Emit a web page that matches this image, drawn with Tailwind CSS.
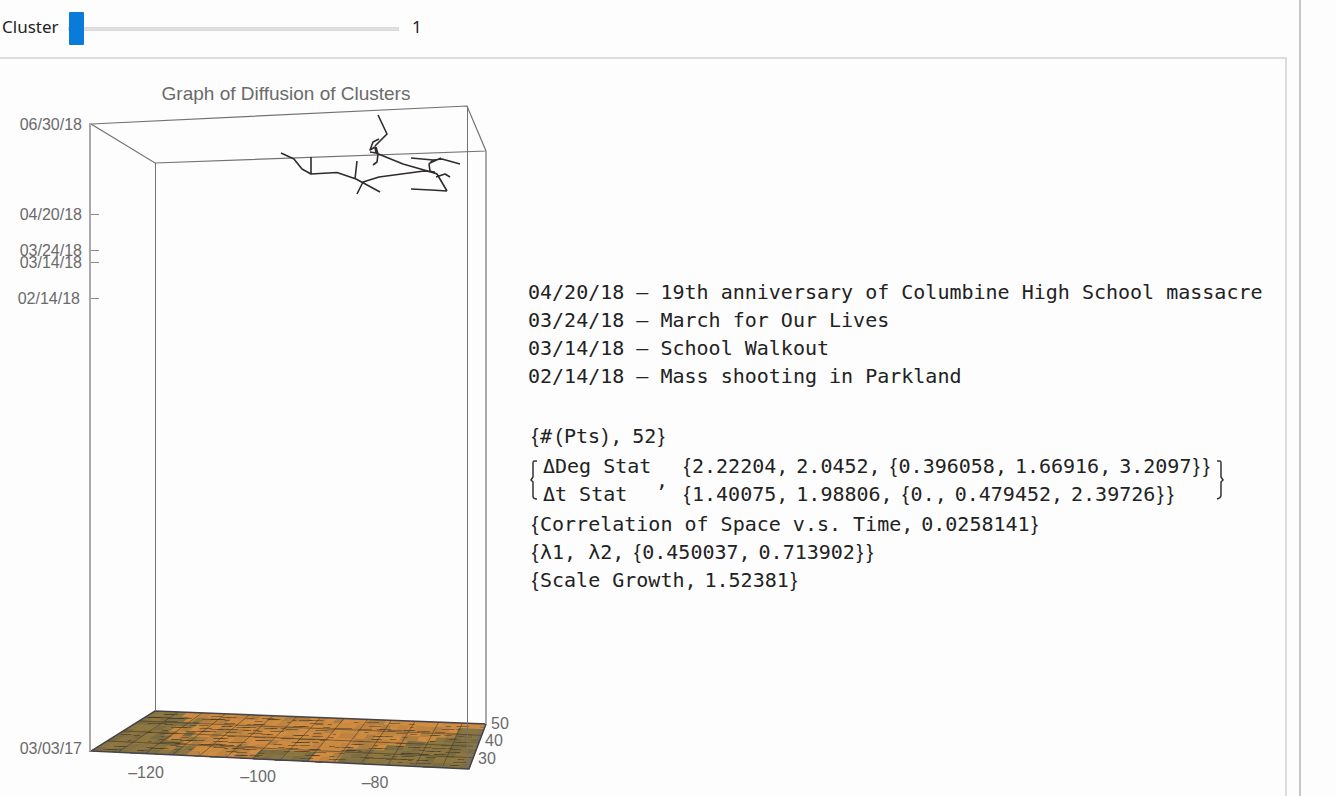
<!DOCTYPE html>
<html lang="en">
<head>
<meta charset="utf-8">
<title>Graph of Diffusion of Clusters</title>
<script src="https://cdn.jsdelivr.net/npm/@tailwindcss/browser@4"></script>
</head>
<body class="bg-[#fdfdfd] text-[#222]">
<div class="flex flex-col min-h-screen mr-[35px] pr-3 border-r-2 border-[#c6c6c6]">
  <header class="flex items-center h-[57px] pl-[2px] font-['Noto_Sans'] text-[17px]">
    <label for="cluster" class="w-[66px] pb-[3px]">Cluster</label>
    <input id="cluster" type="range" min="1" max="20" value="1" class="appearance-none w-[331px] h-[34px] bg-transparent [&::-webkit-slider-runnable-track]:h-[4px] [&::-webkit-slider-runnable-track]:bg-[#e0e0e0] [&::-webkit-slider-runnable-track]:border [&::-webkit-slider-runnable-track]:border-[#dadada] [&::-webkit-slider-thumb]:appearance-none [&::-webkit-slider-thumb]:w-[15px] [&::-webkit-slider-thumb]:h-[33px] [&::-webkit-slider-thumb]:-mt-[16px] [&::-webkit-slider-thumb]:bg-[#0a7bd9] [&::-webkit-slider-thumb]:rounded-[1px]">
    <output for="cluster" class="pl-[13px] pb-[3px]">1</output>
  </header>
  <main class="flex flex-1 items-start border-t-2 border-r-2 border-[#dcdcdc]">
    <svg viewBox="0 59 520 737" class="w-[520px] shrink-0 font-['Liberation_Sans'] text-[16px]" fill="#6a6a6a" role="img" aria-label="3D plot of cluster diffusion">
      <text x="286" y="100" text-anchor="middle" class="text-[19px]">Graph of Diffusion of Clusters</text>
      <g text-anchor="end">
        <text x="82" y="130">06/30/18</text>
        <text x="82" y="220">04/20/18</text>
        <text x="82" y="256">03/24/18</text>
        <text x="82" y="268">03/14/18</text>
        <text x="80" y="304">02/14/18</text>
        <text x="82" y="754">03/03/17</text>
      </g>
      <g text-anchor="middle">
        <text x="146" y="778">–120</text>
        <text x="258" y="782">–100</text>
        <text x="375" y="788">–80</text>
        <text x="500" y="729">50</text>
        <text x="494" y="746">40</text>
        <text x="487" y="764">30</text>
      </g>
      <g id="terrain"></g>
      <g fill="none" stroke="#727272" stroke-width="1.2">
        <path d="M91 124L467 106L486 151L155 163Z"/>
        <path d="M155.500 163V711M467.500 106V768" stroke-width="1"/>
        <path d="M90 123V751M486 151V724" stroke="#a9a9a9" stroke-width="2"/>
        <path d="M91 214.500h8M91 250.500h8M91 262.500h8M91 298.500h8" stroke="#888"/>
      </g>
      <g fill="none" stroke="#302c2e" stroke-width="1.600" stroke-linejoin="round">
        <path d="M281 153L294 159L302 169L311 174L337 172.500L356 179L380 192M311 157V174M357 161L355 179M357 194L363 182L379 177L424 171L435 172"/>
        <path d="M378 115L387 134L375 146M379 139L373 142L370 150L375 147L376 153L370 152M376 147L378 154L377 162L373 165M376 153L403 164L431 172L437 174L447 191M411 158L433 160L442 159L460 164M433 160L429 164L430 171L437 174M430 163L441 158M436 177L445 174L450 177M411 189L431 190L447 191"/>
      </g>
    </svg>
    <section class="flex-1 min-w-0 pl-2 pt-[219px] font-['DejaVu_Sans_Mono'] text-[20px] leading-7 whitespace-nowrap">
      <p>04/20/18 – 19th anniversary of Columbine High School massacre</p>
      <p>03/24/18 – March for Our Lives</p>
      <p>03/14/18 – School Walkout</p>
      <p>02/14/18 – Mass shooting in Parkland</p>
      <div class="pl-[2px] pt-8">
        <p class="flex"><span class="w-[10px] text-center font-['Liberation_Sans']">{</span><span class="w-[14px]">#</span><span class="w-[10px] text-center font-['Liberation_Sans']">(</span>Pts<span class="w-[10px] text-center font-['Liberation_Sans']">)</span><span class="w-[22px]">,</span>52<span class="w-[10px] text-center font-['Liberation_Sans']">}</span></p>
        <div class="flex items-center gap-[5px] py-[2px]">
          <svg class="w-2 h-10 shrink-0" viewBox="0 0 8 40" fill="none" stroke="#333" stroke-width="1.500"><path d="M7 1H4Q3 1 3 3V17L1 20L3 22V36Q3 39 7 39"/></svg>
          <div class="w-[108px]"><p>ΔDeg Stat</p><p>Δt Stat</p></div>
          <span class="w-[21px]">,</span>
          <div>
            <p class="flex"><span class="w-[10px] text-center font-['Liberation_Sans']">{</span>2.22204<span class="w-5">,</span>2.0452<span class="w-5">,</span><span class="w-[10px] text-center font-['Liberation_Sans']">{</span>0.396058<span class="w-5">,</span>1.66916<span class="w-5">,</span>3.2097<span class="w-[10px] text-center font-['Liberation_Sans']">}</span><span class="w-[10px] text-center font-['Liberation_Sans']">}</span></p>
            <p class="flex"><span class="w-[10px] text-center font-['Liberation_Sans']">{</span>1.40075<span class="w-5">,</span>1.98806<span class="w-5">,</span><span class="w-[10px] text-center font-['Liberation_Sans']">{</span>0.<span class="w-5">,</span>0.479452<span class="w-5">,</span>2.39726<span class="w-[10px] text-center font-['Liberation_Sans']">}</span><span class="w-[10px] text-center font-['Liberation_Sans']">}</span></p>
          </div>
          <svg class="w-2 h-10 shrink-0" viewBox="0 0 8 40" fill="none" stroke="#333" stroke-width="1.500"><path d="M1 1H4Q5 1 5 3V17L7 20L5 22V35Q5 38 1 39"/></svg>
        </div>
        <p class="flex"><span class="w-[10px] text-center font-['Liberation_Sans']">{</span>Correlation of Space v.s. Time<span class="w-5">,</span>0.0258141<span class="w-[10px] text-center font-['Liberation_Sans']">}</span></p>
        <p class="flex"><span class="w-[10px] text-center font-['Liberation_Sans']">{</span>λ1, λ2<span class="w-5">,</span><span class="w-[10px] text-center font-['Liberation_Sans']">{</span>0.450037<span class="w-5">,</span>0.713902<span class="w-[10px] text-center font-['Liberation_Sans']">}</span><span class="w-[10px] text-center font-['Liberation_Sans']">}</span></p>
        <p class="flex"><span class="w-[10px] text-center font-['Liberation_Sans']">{</span>Scale Growth<span class="w-5">,</span>1.52381<span class="w-[10px] text-center font-['Liberation_Sans']">}</span></p>
      </div>
    </section>
  </main>
</div>
<script>
// Map floor of the 3D box: a seeded patchwork of cells with contour lines.
let seed = 11;
const rnd = () => (seed = (seed * 16807) % 2147483647) / 2147483647;
const at = (u, v) => [91 + 378 * u + v * (64 - 47 * u), 751 + 18 * u + v * (-40 - 5 * u)];
const pt = (u, v) => at(u, v).map(n => n.toFixed(1)).join(' ');
const cols = 40, rows = 9;
let out = `<path fill="#b98140" d="M${pt(0,0)}L${pt(1,0)}L${pt(1,1)}L${pt(0,1)}Z"/>`;
for (let i = 0; i < cols; i++) for (let j = 0; j < rows; j++) {
  const u = i / cols, v = j / rows, w = 1 / cols, h = 1 / rows;
  const n = (rnd() - 0.5) * 0.1;
  const olive = u + v * 0.16 + n < 0.24 || (u > 0.4 && u < 0.56 && v < 0.2) || (u > 0.63 && v + n < (u - 0.63) * 1.9 + 0.15) || (u > 0.9 && v < 0.8);
  const shades = olive ? ['#877544', '#7a6b41', '#8c7741', '#807043'] : ['#cf8b40', '#c98a41', '#ae7d40', '#d08d43', '#c08340'];
  const c = shades[Math.floor(rnd() * shades.length)];
  out += `<path fill="${c}" d="M${pt(u,v)}L${pt(u+w,v)}L${pt(u+w,v+h)}L${pt(u,v+h)}Z"/>`;
}
let contours = '';
for (let i = 0; i < 300; i++) {
  const u = rnd() * 0.96, v = Math.floor(rnd() * 14) / 14, l = 0.008 + rnd() * 0.032;
  const [x, y] = at(u, v), row = Math.round(y) + 0.5;
  contours += `M${x.toFixed(1)} ${row}H${Math.min(at(1, v)[0], x + l * 378).toFixed(1)}`;
}
let mesh = '', ticks = '';
for (let i = 1; i < 14; i++) mesh += `M${pt(i / 14, 0)}L${pt(i / 14, 1)}`;
for (let i = 1; i < 4; i++) mesh += `M${pt(0, i / 4)}L${pt(1, i / 4)}`;
for (let i = 1; i < 14; i++) ticks += `M${pt(i / 14, 0)}v-4`;
for (let i = 1; i < 14; i++) ticks += `M${pt(1, i / 14)}h-5`;
out += `<path fill="none" stroke="#3d3526" stroke-opacity=".5" d="${contours}"/>`;
out += `<path fill="none" stroke="#463b26" stroke-opacity=".6" d="${mesh}"/>`;
out += `<path fill="none" stroke="#6f6f77" d="${ticks}"/>`;
out += `<path fill="none" stroke="#45434a" stroke-width="1.5" d="M${pt(0,0)}L${pt(1,0)}L${pt(1,1)}L${pt(0,1)}Z"/>`;
document.getElementById('terrain').innerHTML = out;
</script>
</body>
</html>
